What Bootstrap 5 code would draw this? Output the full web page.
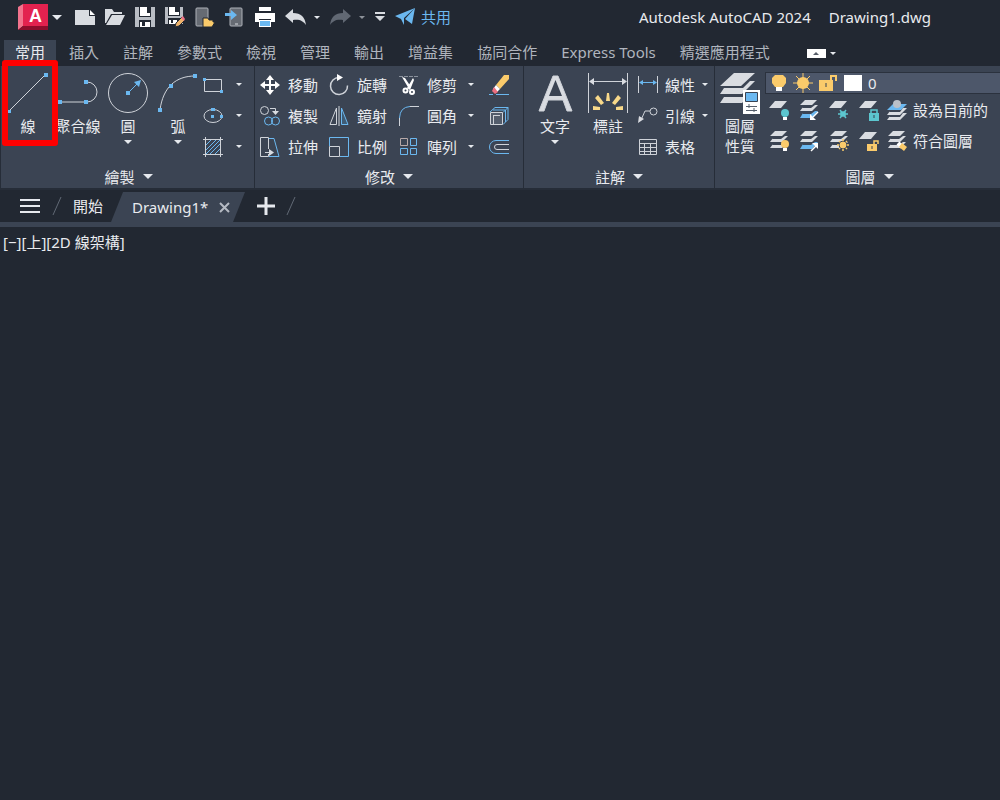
<!DOCTYPE html>
<html lang="zh-Hant">
<head>
<meta charset="utf-8">
<meta name="viewport" content="width=device-width, initial-scale=1">
<title>Autodesk AutoCAD 2024</title>
<link href="https://cdn.jsdelivr.net/npm/bootstrap@5.3.0/dist/css/bootstrap.min.css" rel="stylesheet">
<style>
:root{--ink:#222832;--panel:#3b4453;--edge:#262d38;--text:#e9ebef;--pale:#d9dce1;--blue:#6bb8f0}
body{background:var(--ink);color:var(--text);font-family:"Noto Sans","Noto Sans CJK TC",sans-serif;font-size:15px;line-height:20px}
button,select{font:inherit;color:inherit;background:none;border:0;padding:0;white-space:nowrap}
svg{display:block;flex:none;overflow:visible;fill:none;stroke-width:1}
.titlebar{height:34px;padding-left:18px;padding-right:69px}
.qat{gap:10px}
.app-menu{gap:4px;margin-right:3px}
.doc-title{gap:18px}
.share{color:var(--blue);gap:6px}
.tabs{padding-left:4px;padding-top:6px;gap:2px}
.tabs a{color:#b0b5be;text-decoration:none;padding:2px 11px 4px;white-space:nowrap}
.tabs a.active{background:var(--panel);color:var(--text)}
.ribbon{background:var(--panel);border-bottom:2px solid var(--edge)}
.panel{border-left:1px solid var(--edge);padding-top:3px;height:122px;flex:none}
.p-draw{width:254px;padding-left:2px}
.p-modify{width:269px}
.p-note{width:191px}
.p-layer{flex:1 0 285px}
.tools{height:93px}
.panel-title{height:25px;padding-top:4px;gap:8px}
.big{width:50px;height:93px;padding-top:3px;display:flex;flex-direction:column;align-items:center;gap:2px}
.big .caret{margin-top:2px}
.caret{width:0;height:0;border:4px solid transparent;border-top-color:#e6e9ee;border-bottom:0;flex:none}
.caret-lg{border-width:5px;border-bottom:0}
.caret-sm{border-width:3px;border-bottom:0}
.dim{opacity:.55}
.tool{height:31px;display:flex;align-items:center;gap:8px}
.split{display:flex;align-items:center;gap:8px}
.draw-small{width:39px;justify-content:space-between}
.modify-grid{display:grid;grid-template-columns:69px 70px 90px 20px;padding-left:5px}
.modify-grid .split{gap:11px}
.note-big{padding-left:6px;gap:3px}
.note-col{padding-left:2px}
.note-col .tool{gap:7px}
.note-col .split{gap:7px}
.layer-main{padding-left:6px;padding-right:6px}
.layer-combo{height:22px;background:#4d576a;border:1px solid #2b323e;border-right:0;margin-top:3px;padding-left:5px;gap:6px;overflow:hidden}
.layer-combo select{appearance:none;outline:0}
.layer-row{height:31px;gap:10px;padding-left:4px}
.layer-row .tool{gap:6px;margin-left:-2px}
.filetabs{height:32px;background:var(--ink);padding-left:20px}
.filetabs a{color:var(--text);text-decoration:none}
.slash{width:9px;height:18px}
.slash-start{margin:0 11px 0 13px}
.current{background:var(--panel);clip-path:polygon(12px 0,100% 0,calc(100% - 12px) 100%,0 100%);height:30px;margin-top:2px;padding:0 14px 0 21px;gap:11px;width:134px}
.strip{height:5px;background:var(--panel)}
.view-label{padding:5px 3px}
.callout{position:absolute;left:1px;top:-6px;width:56px;height:86px;border:6px solid #fe0000;border-radius:3px;pointer-events:none;z-index:2}
.w{stroke:#cfd3d9}.b{stroke:#6bb8f0}.fw{fill:#d9dce1}.fb{fill:#6bb8f0}.fy{fill:#fbcb6b}.ft{fill:#5cc6cf}
</style>
</head>
<body>
<svg width="0" height="0" class="position-absolute" aria-hidden="true">
<defs>
<symbol id="sheet" viewBox="0 0 20 20"><path class="fw" d="M6 1h12l-6 7H0z"/></symbol>
<symbol id="stack" viewBox="0 0 20 20"><path class="fw" d="M6 0h12l-5 5H1zM4 7l-3 4h12l6-6h-3l-4 3H3zM4 13l-3 4h12l6-6h-3l-4 3H3z"/></symbol>
<symbol id="stackb" viewBox="0 0 20 20"><path class="fw" d="M6 0h12l-5 5H1zM4 7l-3 4h12l6-6h-3l-4 3H3z"/><path class="fb" d="M4 13l-3 5h12l6-7h-3l-4 3H3z"/></symbol>
</defs>
</svg>

<header>
<div class="titlebar d-flex align-items-center justify-content-between">
<div class="qat d-flex align-items-center">
<button class="app-menu d-flex align-items-center" aria-label="應用程式"><svg width="30" height="26"><path fill="#e3224f" d="M5 0h25v22H5z"/><path fill="#f2738d" d="M0 3l5-3v22l-5 4z"/><path fill="#8d0d2c" d="M5 22h25v4H0z"/><text x="11" y="18" fill="#fff" font-size="18" font-weight="700" font-family="Liberation Sans, sans-serif">A</text></svg><span class="caret caret-lg"></span></button>
<button aria-label="新建"><svg width="20" height="20"><path class="fw" d="M0 3h14v6h6v9H0z"/><path fill="#fff" d="M15 3l5 5h-5z"/></svg></button>
<button aria-label="開啟"><svg width="20" height="20"><path class="fw" d="M0 2h7l2 3h8v2H6L1 16H0zM7 8h13l-5 10H1z"/></svg></button>
<button aria-label="儲存"><svg width="20" height="20"><path fill="#b9bdc4" d="M0 0h20v20H0z"/><path fill="#222832" d="M4 0h12v10H4zM4 13h12v7H4z"/><path fill="#fff" d="M5 0h7v6h3v3H5zM5 15h2v4h3v-4h5v5H5z"/></svg></button>
<button aria-label="另存新檔"><svg width="20" height="20"><path fill="#b9bdc4" d="M0 0h18v17H0z"/><path fill="#222832" d="M3 0h12v9H3zM3 11h12v6H3z"/><path fill="#fff" d="M4 0h6v5h4v3H4zM4 13h2v3h2v-3h4v4H4z"/><path fill="#eeb36b" stroke="#222832" d="M10 20l1-4 6-6 3 3-6 6z"/><path fill="#ed7288" d="M16 11l2-2 2 3-1 2z"/></svg></button>
<button aria-label="從行動裝置開啟"><svg width="20" height="20"><rect x="1" y="1" width="12" height="18" rx="1" fill="#666b73" stroke="#aeb2b9"/><path fill="#fbcb6b" stroke="#222832" d="M8 11h5l1 2h4v2h2l-3 5H8z"/></svg></button>
<button aria-label="儲存到行動裝置"><svg width="20" height="20"><rect x="5" y="1" width="12" height="18" rx="1" fill="#666b73" stroke="#aeb2b9"/><path stroke="#d9dce1" d="M10 17h3"/><path class="fb" d="M0 6h6V3l6 5-6 5V9H0z"/></svg></button>
<button aria-label="列印"><svg width="20" height="20"><path fill="#fff" d="M4 0h12v4H4zM0 6h20v9h-4v-3H4v3H0zM4 13h12v7H4z"/><path class="fb" d="M5 14h10v5H5z"/></svg></button>
<button class="split" aria-label="退回"><svg width="21" height="16"><path class="fw" d="M0 7l8-7v4c8 0 12 4 13 12-3-4-6-6-13-5v3z"/></svg><span class="caret caret-sm"></span></button>
<button class="split" aria-label="重做"><svg width="21" height="16"><path fill="#616873" d="M21 7l-8-7v4C5 4 1 8 0 16c3-4 6-6 13-5v3z"/></svg><span class="caret caret-sm dim"></span></button>
<button aria-label="自訂快速存取工具列"><svg width="10" height="10"><path class="fw" d="M0 0h10v2H0zM0 4h10L5 9z"/></svg></button>
<button class="share d-flex align-items-center"><svg width="20" height="18"><path class="fb" d="M0 8L20 0 9 10v7l-3-6zM20 0l-3 16-7-5z"/></svg>共用</button>
</div>
<div class="doc-title d-flex text-nowrap"><span>Autodesk AutoCAD 2024</span><span>Drawing1.dwg</span></div>
</div>
<nav class="tabs d-flex">
<a href="#" class="active">常用</a><a href="#">插入</a><a href="#">註解</a><a href="#">參數式</a><a href="#">檢視</a><a href="#">管理</a><a href="#">輸出</a><a href="#">增益集</a><a href="#">協同合作</a><a href="#">Express Tools</a><a href="#">精選應用程式</a>
<button class="split gap-1 ms-4" aria-label="最小化功能區"><svg width="19" height="9"><path fill="#fff" d="M0 0h19v9H0z"/><path fill="#555c68" d="M6 6l3-3 3 3z"/></svg><span class="caret caret-sm"></span></button>
</nav>
</header>

<section class="ribbon d-flex">
<div class="panel p-draw position-relative">
<div class="tools d-flex">
<button class="big"><svg width="40" height="42"><path class="w" d="M1 39L38 2"/><path class="fb" d="M0 38h3v3H0zM36 1h4v4h-4z"/></svg>線</button>
<button class="big"><svg width="40" height="42"><path class="w" d="M2 30h27a10 10 0 0 0 0-20"/><path class="fb" d="M0 28h4v4H0zM26 28h4v4h-4zM26 8h4v4h-4z"/></svg>聚合線</button>
<button class="big"><svg width="40" height="42"><circle class="w" cx="20" cy="21" r="19.500"/><path class="b" d="M20 21L30 11"/><path class="fb" d="M18 19h4v4h-4zM33 8l-2 7-5-5z"/></svg>圓<span class="caret"></span></button>
<button class="big"><svg width="40" height="42"><path class="w" d="M2 38C5 15 18 4 37 4"/><path class="fb" d="M0 36h4v4H0zM11 12h4v4h-4zM35 2h4v4h-4z"/></svg>弧<span class="caret"></span></button>
<div>
<button class="tool draw-small" aria-label="矩形"><svg width="20" height="20"><path class="w" d="M1.500 4.500h17v12h-17z"/><path class="fb" d="M0 3h3v3H0zM17 15h3v3h-3z"/></svg><span class="caret caret-sm"></span></button>
<button class="tool draw-small" aria-label="橢圓"><svg width="20" height="20"><ellipse class="w" cx="10" cy="10" rx="9" ry="6.500"/><path class="fb" d="M8 2h4v3H8zM8 9h3v3H8zM17 9h3v3h-3z"/></svg><span class="caret caret-sm"></span></button>
<button class="tool draw-small" aria-label="填充線"><svg width="20" height="20"><path class="b" d="M3 8l5-5M3 13L13 3M3 17L17 3M7 17L17 7M12 17l5-5"/><path class="w" d="M2.500 0v20M17.500 0v20M0 2.500h20M0 17.500h20"/></svg><span class="caret caret-sm"></span></button>
</div>
</div>
<div class="panel-title d-flex justify-content-center align-items-center">繪製<span class="caret caret-lg"></span></div>
<div class="callout"></div>
</div>

<div class="panel p-modify">
<div class="tools modify-grid">
<button class="tool"><svg width="20" height="20"><path fill="#fff" d="M10 0l4 5h-3v4h4V6l5 4-5 4v-3h-4v4h3l-4 5-4-5h3v-4H5v3l-5-4 5-4v3h4V5H6z"/></svg>移動</button>
<button class="tool"><svg width="20" height="20"><path class="w" stroke-width="1.500" d="M10 2.500a8.500 8.500 0 1 0 8.500 8"/><path fill="#fff" d="M8-1l6 3.500L8 6z"/></svg>旋轉</button>
<div class="split"><button class="tool"><svg width="20" height="20"><path stroke="#8a919c" stroke-dasharray="4 1" d="M0 1.500h20"/><path fill="#fff" d="M3 2l3 1 6 9-2 2zM14 3l1 2-4 10-3-2z"/><circle cx="6.500" cy="15.500" r="2" stroke="#fff" stroke-width="2"/><circle cx="13" cy="17" r="2" stroke="#fff" stroke-width="2"/></svg>修剪</button><span class="caret caret-sm"></span></div>
<button class="tool" aria-label="刪除"><svg width="20" height="20"><path class="fy" d="M15 0h5v4l-9 10-4-4z"/><path fill="#fff" d="M7 10l4 4-3 3-4-3z"/><path fill="#ed6f80" d="M5 12l4 5-3 2-3-3z"/><path class="b" d="M0 19.500h4M7 19.500h13"/></svg></button>
<button class="tool"><svg width="20" height="20"><circle class="w" cx="4.500" cy="4.500" r="4"/><path class="w" d="M10 2.500h5.500v4"/><path class="fw" d="M12 5h7l-3.500 4z"/><circle class="b" cx="8.500" cy="15" r="4"/><circle class="b" cx="15.500" cy="15" r="4"/></svg>複製</button>
<button class="tool"><svg width="20" height="20"><path class="w" d="M7.500 2v16.500H1zM10 0v20"/><path class="b" fill="#3f5c75" d="M12.500 2v16.500H19z"/></svg>鏡射</button>
<div class="split"><button class="tool"><svg width="20" height="20"><path class="b" d="M.5 12Q1 1 11 .5"/><path class="w" d="M.5 12v8M11 .5h9"/></svg>圓角</button><span class="caret caret-sm"></span></div>
<button class="tool" aria-label="分解"><svg width="20" height="20"><path class="b" d="M1 6l5-4.500h13v12l-5 5M19 1.500l-5 5M16.500 4v12M4 4h12"/><path class="w" fill="#535d6c" d="M1.500 6.500h12v12h-12zM4.500 9v9M4 9.500h7"/></svg></button>
<button class="tool"><svg width="20" height="20"><path class="w" d="M8.500 12V.5h-8v19h8V17"/><path class="b" d="M9 1.500h5l5 18H9"/><path class="w" d="M5 15.500h7"/><path class="fw" d="M9 12l5 3.500L9 19z"/></svg>拉伸</button>
<button class="tool"><svg width="20" height="20"><path class="b" d="M.5 9V.5h19v19H11"/><path class="w" d="M.5 9.500h10v10H.5z"/></svg>比例</button>
<div class="split"><button class="tool"><svg width="20" height="20"><path stroke="#b7a9a8" d="M1.500 1.500h7v7h-7z"/><path class="b" d="M11.500 1.500h6v7h-6zM1.500 11.500h7v6h-7zM11.500 11.500h6v6h-6z"/></svg>陣列</button><span class="caret caret-sm"></span></div>
<button class="tool" aria-label="偏移"><svg width="20" height="20"><path class="b" d="M20 3.500H7a6.500 6.500 0 0 0 0 13h13"/><path class="w" d="M20 7.500H8a2.500 2.500 0 0 0 0 5h12"/></svg></button>
</div>
<div class="panel-title d-flex justify-content-center align-items-center">修改<span class="caret caret-lg"></span></div>
</div>

<div class="panel p-note">
<div class="tools note-big d-flex">
<button class="big"><svg width="40" height="42"><path class="fw" fill-rule="evenodd" d="M4 39L18 4h5l14 35h-5l-4-11H13L9 39zM14 24h13L20.500 8z"/><path class="w" d="M4 39L18 4h5l14 35h-5l-4-11H13L9 39z"/></svg>文字<span class="caret"></span></button>
<button class="big"><svg width="40" height="42"><path class="w" d="M.5 1v40M39.500 1v40M3 9.500h34"/><path class="fw" d="M1 9.500L6 6v7zM39 9.500L34 6v7z"/><path fill="#f8d98a" d="M18 29l1-8h2l1 8zM16 31l-6-8-3 3 6 7zM24 31l6-8 3 3-6 7zM12 35l-7-1v4h7zM28 35l7-1v4h-7z"/></svg>標註</button>
<div class="note-col">
<div class="split"><button class="tool"><svg width="20" height="20"><path class="w" d="M.5 1v17M19.500 1v17"/><path class="b" d="M2 7.500h16"/><path class="fb" d="M1 7.500L5 5v5zM19 7.500L15 5v5z"/></svg>線性</button><span class="caret caret-sm"></span></div>
<div class="split"><button class="tool"><svg width="20" height="20"><path class="w" d="M3 14l4-9h5"/><circle class="w" cx="15.500" cy="5.500" r="3.500"/><path class="fw" d="M0 17l1-7 5 3z"/></svg>引線</button><span class="caret caret-sm"></span></div>
<button class="tool"><svg width="20" height="20"><path class="w" d="M1.500 2.500h17v15h-17zM1 6.500h18M1 10.500h18M1 14.500h18M6.500 6v12M12.500 6v12"/></svg>表格</button>
</div>
</div>
<div class="panel-title d-flex justify-content-center align-items-center">註解<span class="caret caret-lg"></span></div>
</div>

<div class="panel p-layer">
<div class="tools d-flex">
<button class="big layer-main"><svg width="40" height="42"><path class="fw" d="M14 1h21L21 14H0zM4 16h19l7-7h5L22 22H0zM4 25h19l7-7h5L22 31H0z"/><path fill="#fff" d="M23 18h17v24H23z"/><path fill="#6bb8f0" stroke="#3b4453" d="M25.500 20.500h12v9h-12z"/><path stroke="#555e6b" d="M26 34.500h11M26 38.500h11M29 32v4M34 36v4"/></svg><span>圖層<br>性質</span></button>
<div class="flex-fill">
<div class="layer-combo d-flex align-items-center">
<svg width="16" height="18"><path class="fy" d="M4 1h8l3 3v5l-3 4H4L1 9V4z"/><path fill="#fff" d="M5 13h6v4H5z"/></svg>
<svg width="20" height="20"><circle class="fy" cx="10" cy="10" r="6"/><path stroke="#fbcb6b" d="M10 0v20M0 10h20M3 3l14 14M17 3L3 17"/></svg>
<svg width="19" height="18"><path class="fy" d="M0 6h14v11H0z"/><path stroke="#fbcb6b" stroke-width="2" d="M12 6V2h5v5"/><path stroke="#3b4453" d="M7 9v4"/></svg>
<svg width="18" height="16"><path fill="#fff" d="M0 0h18v16H0z"/></svg>
<select class="flex-fill" aria-label="圖層"><option>0</option></select>
</div>
<div class="layer-row d-flex align-items-center">
<button aria-label="關閉"><svg width="20" height="20"><use href="#sheet" width="20" height="20"/><circle class="ft" cx="16" cy="13" r="4"/><path fill="#fff" d="M14 17h4v3h-4z"/></svg></button>
<button aria-label="隔離"><svg width="20" height="20"><use href="#stackb" width="20" height="20"/><path stroke="#fff" stroke-width="1.500" d="M19 12l-5 5"/><path fill="#fff" d="M11 14v6h6z"/></svg></button>
<button aria-label="凍結"><svg width="20" height="20"><use href="#sheet" width="20" height="20"/><path stroke="#5cc6cf" stroke-width="1.500" d="M9 14h10M11 10l6 8M17 10l-6 8M12 12h4v4h-4z"/></svg></button>
<button aria-label="鎖住"><svg width="20" height="20"><use href="#sheet" width="20" height="20"/><path class="ft" d="M10 13h10v8H10z"/><path stroke="#5cc6cf" stroke-width="1.500" d="M12 13v-3h6v3"/><path stroke="#344150" d="M15 15v3"/></svg></button>
<button class="tool"><svg width="20" height="20"><path class="fb" d="M6 4h14l-6 6H0z"/><circle cx="10" cy="4" r="4" fill="#bbc0c8"/><path class="fw" d="M3 11l-3 4h13l7-7h-4l-3 4H2zM3 16l-3 4h13l7-7h-4l-3 4H2z"/></svg>設為目前的</button>
</div>
<div class="layer-row d-flex align-items-center">
<button aria-label="打開所有圖層"><svg width="20" height="20"><use href="#stack" width="20" height="20"/><circle class="fy" cx="16" cy="13" r="4"/><path fill="#fff" d="M14 17h4v3h-4z"/></svg></button>
<button aria-label="取消隔離"><svg width="20" height="20"><use href="#stackb" width="20" height="20"/><path stroke="#fff" stroke-width="1.500" d="M12 20l5-5"/><path fill="#fff" d="M13 12h6v6z"/></svg></button>
<button aria-label="解凍"><svg width="20" height="20"><use href="#stack" width="20" height="20"/><circle fill="#fbcb6b" stroke="#3b4453" cx="14" cy="14" r="4"/><path stroke="#fbcb6b" stroke-width="1.500" d="M14 8v2M14 18v2M8 14h2M18 14h2M10 10l1 1M17 17l1 1M18 10l-1 1M11 17l-1 1"/></svg></button>
<button aria-label="解鎖"><svg width="20" height="20"><use href="#sheet" width="20" height="20"/><path class="fy" d="M8 13h10v7H8z"/><path stroke="#fbcb6b" stroke-width="1.500" d="M15 13v-3h4v3"/><path stroke="#3b4453" d="M13 15v3"/></svg></button>
<button class="tool"><svg width="20" height="20"><use href="#stack" width="20" height="20"/><path stroke="#fff" stroke-width="4" d="M11 12l4 4"/><path class="fy" d="M15 12l5 4-3 4-5-4z"/></svg>符合圖層</button>
</div>
</div>
</div>
<div class="panel-title d-flex justify-content-center align-items-center ps-4">圖層<span class="caret caret-lg"></span></div>
</div>
</section>

<nav class="filetabs d-flex align-items-center">
<button aria-label="功能表"><svg width="20" height="16"><path stroke="#e6e9ee" stroke-width="2" d="M0 2h20M0 8h20M0 14h20"/></svg></button>
<svg class="slash slash-start"><path stroke="#616975" d="M0 18L8 0"/></svg>
<a href="#">開始</a>
<div class="current d-flex align-items-center ms-2"><a href="#">Drawing1*</a><button aria-label="關閉圖檔"><svg width="11" height="11"><path stroke="#b5bac3" stroke-width="2" d="M1 1l9 9M10 1l-9 9"/></svg></button></div>
<button class="ms-2 px-1" aria-label="新圖檔"><svg width="18" height="18"><path stroke="#e6e9ee" stroke-width="3" d="M0 9h18M9 0v18"/></svg></button>
<svg class="slash ms-2"><path stroke="#616975" d="M0 18L8 0"/></svg>
</nav>
<div class="strip"></div>
<main class="view-label">[−][上][2D 線架構]</main>
<script src="https://cdn.jsdelivr.net/npm/bootstrap@5.3.0/dist/js/bootstrap.bundle.min.js"></script>
</body>
</html>
